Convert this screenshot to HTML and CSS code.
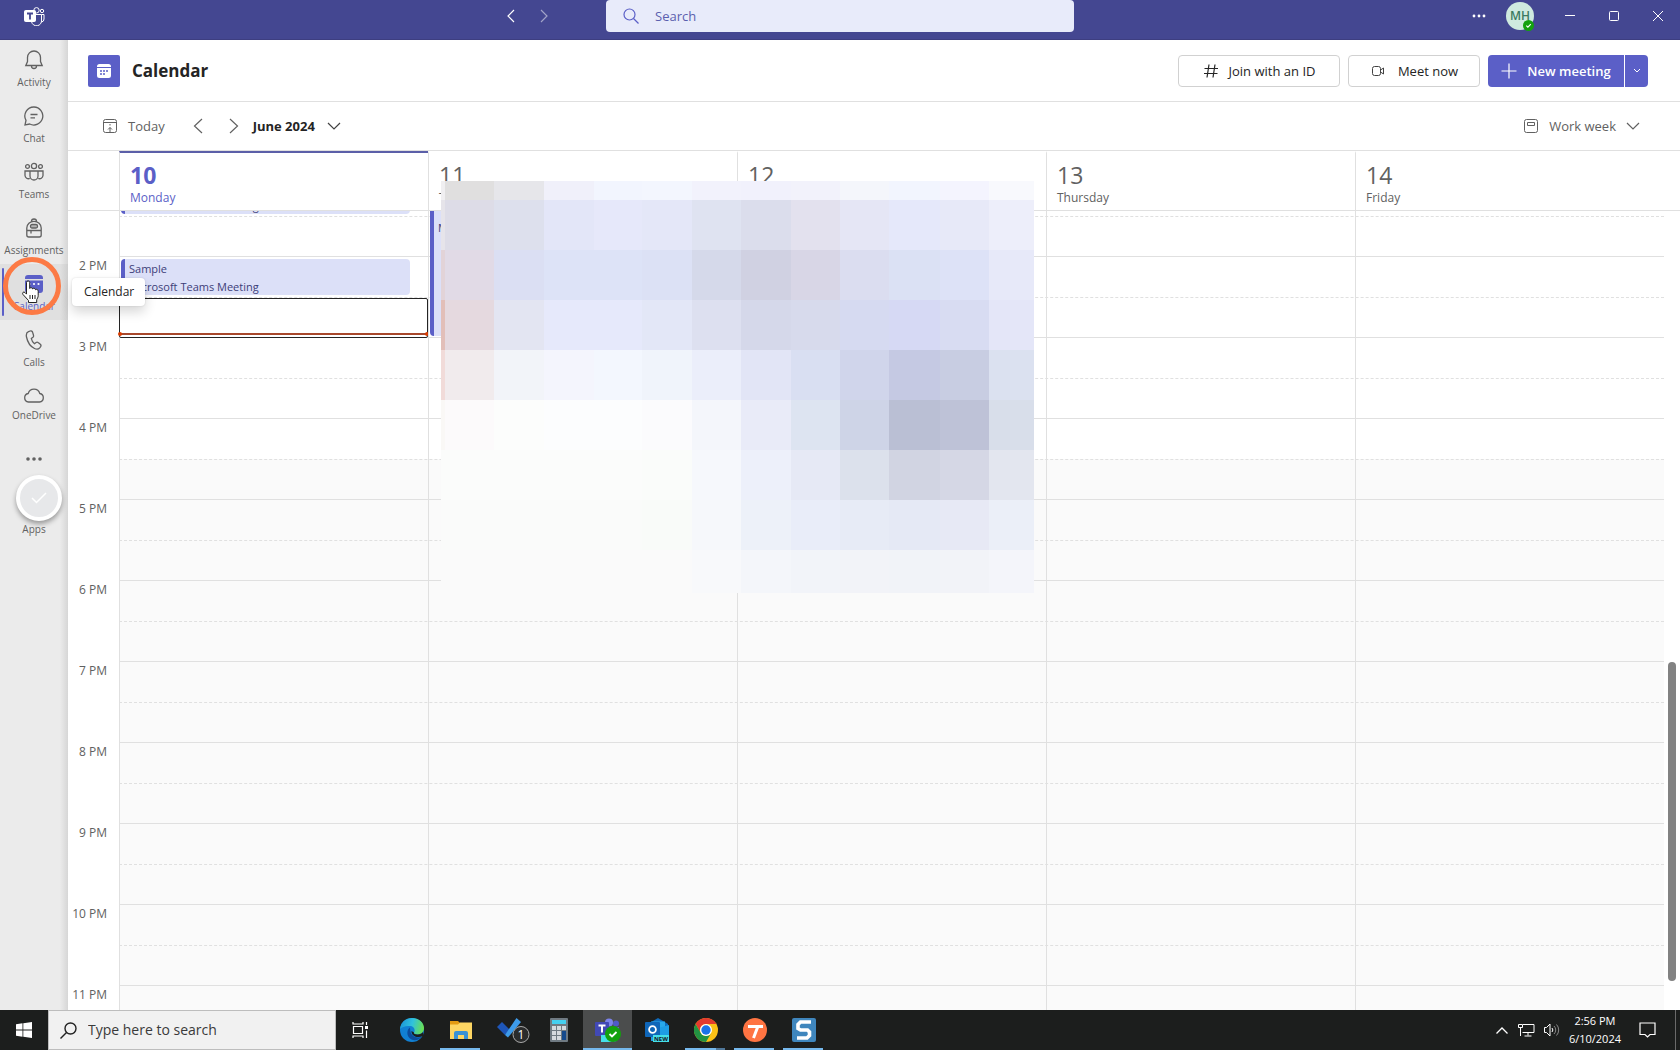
FILE: index.html
```html
<!DOCTYPE html>
<html lang="en">
<head>
<meta charset="utf-8">
<title>Calendar | Microsoft Teams</title>
<link rel="stylesheet" href="styles.css">
</head>
<body>
<header class="titlebar">
  <div class="titlebar-left">
    <svg class="teams-logo" width="21" height="19" viewBox="0 0 21 19" fill="none" stroke="#fff"><circle cx="12.500" cy="3.300" r="2.700"/><circle cx="18" cy="4" r="1.700"/><path d="M12 7.500h5.500v5.500a5 5 0 0 1-10 1.500M17.500 7.500h2.500v4.500a3 3 0 0 1-2.500 3"/><rect x="0.500" y="3.500" width="11" height="11" rx="1" fill="#fff"/><path d="M3 6.500h6M6 6.500v6" stroke="#444791" stroke-width="1.800"/></svg>
    <div class="history">
      <button class="bare" aria-label="Back"><svg width="16" height="16" viewBox="0 0 16 16" fill="none" stroke="#fff" stroke-width="1.200"><path d="M11 2 5 8l6 6"/></svg></button>
      <button class="bare faded" aria-label="Forward"><svg width="16" height="16" viewBox="0 0 16 16" fill="none" stroke="#fff" stroke-width="1.200"><path d="m5 2 6 6-6 6"/></svg></button>
    </div>
  </div>
  <label class="search">
    <svg width="16" height="16" viewBox="0 0 16 16" fill="none" stroke="#5b5fc7" stroke-width="1.200"><circle cx="6.500" cy="6.500" r="5.500"/><path d="m10.500 10.500 5 5"/></svg>
    <input type="text" placeholder="Search" aria-label="Search">
  </label>
  <div class="titlebar-right">
    <button class="bare" aria-label="More"><svg width="14" height="4" viewBox="0 0 14 4" fill="#fff"><circle cx="2" cy="2" r="1.400"/><circle cx="7" cy="2" r="1.400"/><circle cx="12" cy="2" r="1.400"/></svg></button>
    <button class="avatar" aria-label="Profile">MH<svg class="presence" width="11" height="11" viewBox="0 0 11 11"><circle cx="5.500" cy="5.500" r="5.500" fill="#13a10e"/><path d="m3.300 5.600 1.600 1.500 2.900-2.900" fill="none" stroke="#fff" stroke-width="1.200"/></svg></button>
    <button class="bare win" aria-label="Minimize"><svg width="12" height="12" viewBox="0 0 12 12" stroke="#fff"><path d="M1 5.500h10"/></svg></button>
    <button class="bare win" aria-label="Maximize"><svg width="12" height="12" viewBox="0 0 12 12" fill="none" stroke="#fff"><rect x="1.500" y="1.500" width="9" height="9" rx="1"/></svg></button>
    <button class="bare win" aria-label="Close"><svg width="12" height="12" viewBox="0 0 12 12" stroke="#fff"><path d="m1 1 10 10M11 1 1 11"/></svg></button>
  </div>
</header>

<div class="workspace">
  <nav class="rail">
    <a href="#"><svg width="20" height="20" viewBox="0 0 20 20"><path d="M10 1a6.500 6.500 0 0 0-6.500 6.500v4L1.800 15.500h16.400l-1.700-4v-4A6.500 6.500 0 0 0 10 1zM7.500 16a2.500 2.500 0 0 0 5 0"/></svg>Activity</a>
    <a href="#"><svg width="20" height="20" viewBox="0 0 20 20"><path d="M10 1a9 9 0 1 1-4.300 17L1 19l1-4.600A9 9 0 0 1 10 1zM6.500 8.500h7M6.500 11.800h4.500"/></svg>Chat</a>
    <a href="#"><svg width="20" height="20" viewBox="0 0 20 20"><circle cx="10" cy="4" r="2.600"/><circle cx="3.500" cy="4.500" r="1.900"/><circle cx="16.500" cy="4.500" r="1.900"/><path d="M6 9h8v5a4 4 0 0 1-8 0zM5.500 9H1v4.500a3.500 3.500 0 0 0 4.800 3M14.500 9H19v4.500a3.500 3.500 0 0 1-4.800 3"/></svg>Teams</a>
    <a href="#"><svg width="20" height="20" viewBox="0 0 20 20"><path d="M7.500 3.500a2.500 2.500 0 0 1 5 0M2.800 10a7.200 6.700 0 0 1 14.400 0v7a2 2 0 0 1-2 2H4.800a2 2 0 0 1-2-2zM2.800 12.500h14.400M7 12.500v3"/><rect x="6.500" y="6.500" width="7" height="3.500" rx="1.500" fill="#b5b5b5"/></svg>Assignments</a>
    <a href="#" class="current" aria-current="page"><svg width="20" height="20" viewBox="0 0 20 20"><path d="M1 4a3 3 0 0 1 3-3h12a3 3 0 0 1 3 3v1H1zM1 6.500h18V16a3 3 0 0 1-3 3H4a3 3 0 0 1-3-3z" fill="#5b5fc7" stroke="none"/><g fill="#fff" stroke="none"><circle cx="5.500" cy="10" r="1.100"/><circle cx="10" cy="10" r="1.100"/><circle cx="14.500" cy="10" r="1.100"/></g></svg>Calendar</a>
    <a href="#"><svg width="20" height="20" viewBox="0 0 20 20"><path d="M6.200 1 4.500 1.600C2.500 2.400 2 4.500 2.500 7c1 5 4 9.500 8 11.500 2 1 4 .8 5.200-.7l.9-1.200c.5-.7.400-1.700-.3-2.300l-2.200-1.700c-.6-.5-1.400-.5-2-.1l-1.600 1.200C9 12.500 7.700 10.700 7.300 8.500l1.600-1.200c.6-.5.8-1.200.6-1.900L8.700 2.500C8.400 1.300 7.300.6 6.200 1z"/></svg>Calls</a>
    <a href="#" class="drive"><svg width="22" height="20" viewBox="0 0 22 20"><path d="M5.500 16a4.300 4.300 0 0 1-.3-8.500 6 6 0 0 1 11.600 0A4.300 4.300 0 0 1 16.500 16z"/></svg>OneDrive</a>
    <button class="bare rail-more" aria-label="More apps"><svg width="16" height="4" viewBox="0 0 16 4" fill="#616161" stroke="none"><circle cx="2" cy="2" r="1.800"/><circle cx="8" cy="2" r="1.800"/><circle cx="14" cy="2" r="1.800"/></svg></button>
    <a href="#" class="apps">Apps</a>
    <div class="done-badge"><svg width="16" height="12" viewBox="0 0 16 12" fill="none" stroke="#fff" stroke-width="1.500"><path d="m1 6 4.500 4.500L15 1"/></svg></div>
    <div class="click-ring"></div>
    <svg class="pointer" width="19" height="24" viewBox="0 0 19 24"><path d="M5.500 2.500a1.600 1.600 0 0 1 3.200 0v6c.2-1.300 2.700-1.200 2.900.4.600-1.100 2.700-.8 2.900.8.900-.8 2.700-.3 2.700 1.500v4.500c0 1.500-1 3-1.500 4V22.500H7.500V20.500L2 14.500c-1.200-1.600.5-3.300 2-2l1.500 1.600z" fill="#fff" stroke="#222"/><path d="M9 15v4M11.500 15v4M14 15v4" stroke="#222"/></svg>
    <div class="tooltip" role="tooltip">Calendar</div>
  </nav>

  <main class="content">
    <div class="page-head">
      <div class="app-tile"><svg width="16" height="16" viewBox="0 0 16 16"><path d="M1 3.500A2.500 2.500 0 0 1 3.500 1h9A2.500 2.500 0 0 1 15 3.500V4H1zM1 5h14v7.500a2.500 2.500 0 0 1-2.500 2.500h-9A2.500 2.500 0 0 1 1 12.500z" fill="#fff"/><path d="M4 8h2M7 8h2M10 8h2M4 11h2M7 11h2" stroke="#5b5fc7" stroke-width="1.600"/></svg></div>
      <h1>Calendar</h1>
      <div class="actions">
        <button class="btn join"><svg width="16" height="16" viewBox="0 0 16 16" fill="none" stroke="#242424" stroke-width="1.200"><path d="M6 1.500 4 14.500M12 1.500l-2 13M1.500 5.500h13.500M1 10.500h13.500"/></svg>Join with an ID</button>
        <button class="btn meet"><svg width="16" height="16" viewBox="0 0 16 16" fill="none" stroke="#424242"><rect x="2.500" y="3.500" width="8" height="9" rx="2"/><path d="m10.500 7 3-2v6l-3-2"/></svg>Meet now</button>
        <div class="split">
          <button class="new"><svg width="16" height="16" viewBox="0 0 16 16" stroke="#fff" stroke-width="1.200"><path d="M8 0.500v15M.5 8h15"/></svg>New meeting</button>
          <button class="new-more" aria-label="More options"><svg width="8" height="6" viewBox="0 0 8 6" fill="none" stroke="#fff"><path d="m1 1 3 3 3-3"/></svg></button>
        </div>
      </div>
    </div>

    <div class="toolbar">
      <button class="bare today"><svg width="16" height="16" viewBox="0 0 16 16" fill="none" stroke="#616161"><rect x="1.500" y="1.500" width="13" height="13" rx="2"/><path d="M1.500 4.500h13M8 15V9.500M6 11.500l2-2 2 2M8 6v1.500"/></svg>Today</button>
      <button class="bare" aria-label="Previous week"><svg width="10" height="16" viewBox="0 0 10 16" fill="none" stroke="#616161" stroke-width="1.200"><path d="M9 1 1.500 8 9 15"/></svg></button>
      <button class="bare next" aria-label="Next week"><svg width="10" height="16" viewBox="0 0 10 16" fill="none" stroke="#616161" stroke-width="1.200"><path d="m1 1 7.500 7L1 15"/></svg></button>
      <button class="bare month">June 2024<svg width="14" height="8" viewBox="0 0 14 8" fill="none" stroke="#424242" stroke-width="1.200"><path d="m1 1 6 6 6-6"/></svg></button>
      <button class="bare view"><svg width="16" height="16" viewBox="0 0 16 16" fill="none" stroke="#616161"><rect x="1.500" y="1.500" width="13" height="13" rx="2"/><path d="M4.500 4.500h7v3h-7z"/></svg>Work week<svg width="14" height="8" viewBox="0 0 14 8" fill="none" stroke="#616161" stroke-width="1.200"><path d="m1 1 6 6 6-6"/></svg></button>
    </div>

    <div class="day-heads">
      <div class="day-head today-head"><b>10</b><span>Monday</span></div>
      <div class="day-head"><b>11</b><span>Tuesday</span></div>
      <div class="day-head"><b>12</b><span>Wednesday</span></div>
      <div class="day-head"><b>13</b><span>Thursday</span></div>
      <div class="day-head"><b>14</b><span>Friday</span></div>
    </div>

    <div class="viewport">
      <div class="schedule">
        <div class="hours">
          <div class="hour"><span>1 PM</span><div class="slot"></div></div>
          <div class="hour"><span>2 PM</span><div class="slot"></div></div>
          <div class="hour"><span>3 PM</span><div class="slot"></div></div>
          <div class="hour closing"><span>4 PM</span><div class="slot"></div></div>
          <div class="hour off"><span>5 PM</span><div class="slot"></div></div>
          <div class="hour off"><span>6 PM</span><div class="slot"></div></div>
          <div class="hour off"><span>7 PM</span><div class="slot"></div></div>
          <div class="hour off"><span>8 PM</span><div class="slot"></div></div>
          <div class="hour off"><span>9 PM</span><div class="slot"></div></div>
          <div class="hour off"><span>10 PM</span><div class="slot"></div></div>
          <div class="hour off"><span>11 PM</span><div class="slot"></div></div>
        </div>
        <div class="days">
          <div class="day">
            <div class="event" style="top:3px;height:36px">Sample<br>Microsoft Teams Meeting</div>
            <div class="event" style="top:84px;height:36px">Sample<br>Microsoft Teams Meeting</div>
            <div class="selected" style="top:123px;height:40px"></div>
            <div class="now" style="top:158px"></div>
          </div>
          <div class="day"><div class="event busy" style="top:0;height:161px">Meeting</div></div>
          <div class="day"></div>
          <div class="day"></div>
          <div class="day"></div>
        </div>
      </div>
      <div class="track"><div class="thumb" style="top:56.4%;height:40%"></div></div>
    </div>
    <div class="mosaic" id="mosaic"></div>
  </main>
</div>

<footer class="taskbar">
  <button class="bare start" aria-label="Start"><svg width="16" height="16" viewBox="0 0 16 16" fill="#fff"><path d="M0 2.200 6.500 1.300v6.300H0zM7.300 1.200 16 0v7.600H7.300zM0 8.400h6.500v6.300L0 13.800zM7.300 8.400H16V16l-8.700-1.200z"/></svg></button>
  <label class="task-search"><svg width="17" height="17" viewBox="0 0 17 17" fill="none" stroke="#222" stroke-width="1.400"><circle cx="10.500" cy="6.500" r="5.500"/><path d="M6.500 10.500.5 16.500"/></svg><input type="text" placeholder="Type here to search" aria-label="Type here to search"></label>
  <button class="bare app task-view" aria-label="Task view"><svg width="18" height="18" viewBox="0 0 18 18" fill="none" stroke="#fff" stroke-width="1.200"><path d="M2.500 5.500h9v7h-9zM2 1v2h10V1M2 17v-2h10v2M15.500 1v3M15.500 9.500V17"/><path d="M14 5h3v3h-3z" fill="#fff" stroke="none"/></svg></button>
  <button class="bare app" aria-label="Edge"><svg width="24" height="24" viewBox="0 0 24 24"><defs><linearGradient id="e1" x1="0" y1=".3" x2="1" y2=".5"><stop offset="0" stop-color="#1b95d8"/><stop offset=".5" stop-color="#30c2dd"/><stop offset="1" stop-color="#6be04f"/></linearGradient></defs><circle cx="12" cy="12" r="12" fill="#1180d3"/><path d="M0 11C.6 4.500 5.500 0 12 0c7 0 12 4.600 12 10 0 4-3 6.500-6.500 6.500-2.500 0-4-1-3.500-2 1.500-2 .5-6-3.500-6.500C5.500 7.500 1.500 9 0 11z" fill="url(#e1)"/><path d="M10 9.500c-3.500 2-4 9 1.500 12 3.500 1.800 8 .5 10.500-3-4 2-12 1.500-12-9z" fill="#0c4c9c"/><path d="M14 14.500c-.6 1 1 2 3.500 2 2.500 0 4.500-1 5.500-2.500v4c-6 3-12-.5-11.500-5z" fill="#1c1e1d"/></svg></button>
  <button class="bare app open" aria-label="File Explorer"><svg width="22" height="20" viewBox="0 0 22 20"><path d="M0 1h8l2 2v4H0z" fill="#e39b12"/><path d="M0 4.500h8L10 2.500h12V19H0z" fill="#fdd663"/><path d="M4 19v-6a2 2 0 0 1 2-2h10a2 2 0 0 1 2 2v6h-4v-4H8v4z" fill="#3a92d4"/></svg></button>
  <button class="bare app todo" aria-label="To Do"><svg width="34" height="26" viewBox="0 0 34 26"><path d="m1 10 5-5 8 8-5 5z" fill="#1e56b8"/><path d="M9 18 20.500 1 25 5 12 20.500z" fill="#3d9be9"/><circle cx="25" cy="17.500" r="8" fill="#2a2c2c" stroke="#aaa"/><text x="25" y="22" fill="#fff" font-size="12" font-family="Open Sans, sans-serif" text-anchor="middle">1</text></svg></button>
  <button class="bare app" aria-label="Calculator"><svg width="18" height="24" viewBox="0 0 18 24"><rect width="18" height="24" rx="1" fill="#6f7a82"/><path d="M2 2h14v4H2z" fill="#45d0f0"/><path d="M2 8h4v4H2zM7 8h4v4H7zM12 8h4v4h-4zM2 13h4v4H2zM7 13h4v4H7zM2 18h4v4H2zM7 18h4v4H7z" fill="#d5dade"/><path d="M12 13h4v9h-4z" fill="#154a8c"/></svg></button>
  <button class="bare app open active" aria-label="Teams"><svg width="26" height="24" viewBox="0 0 26 24"><circle cx="14" cy="4.500" r="4" fill="#7b83eb"/><circle cx="21" cy="5.500" r="3" fill="#5059c9"/><path d="M8 9h16v7a7 7 0 0 1-16 2z" fill="#5b62c9"/><rect y="4" width="14" height="14" rx="1" fill="#4149b5"/><path d="M3.500 7.500h7M7 7.500v7" stroke="#fff" stroke-width="2"/><path d="M6 17h10v7H6z" fill="#45dfe8"/><circle cx="18" cy="16" r="8" fill="#13a10e"/><path d="m14.500 16 2.500 2.500 4.500-4.500" fill="none" stroke="#fff" stroke-width="1.800"/></svg></button>
  <button class="bare app" aria-label="Outlook"><svg width="24" height="24" viewBox="0 0 24 24"><path d="M3 6 13 0l10 6v4H3z" fill="#0f6cbd"/><path d="M6 3.500h14V12H6z" fill="#28a8ea"/><path d="m6 12 18-5v16H6z" fill="#1e9de5"/><rect y="4" width="15" height="15" rx="1" fill="#0f66b8"/><circle cx="7.500" cy="11.500" r="3.400" fill="none" stroke="#fff" stroke-width="1.800"/><path d="M8 17h16v7H8z" fill="#45dfe8"/><text x="16" y="23" font-family="Open Sans, sans-serif" font-weight="700" font-size="6" text-anchor="middle" fill="#112">NEW</text></svg></button>
  <button class="bare app open stacked" aria-label="Chrome"><svg width="24" height="24" viewBox="0 0 24 24"><circle cx="12" cy="12" r="12" fill="#fbc116"/><path d="M1.600 6A12 12 0 0 1 22.400 6H12a6 6 0 0 0-5.200 9z" fill="#e33b2e"/><path d="M1.600 6A12 12 0 0 0 12 24l5.200-9a6 6 0 0 1-10.400 0z" fill="#229342"/><circle cx="12" cy="12" r="6" fill="#fff"/><circle cx="12" cy="12" r="4.700" fill="#1a73e8"/></svg></button>
  <button class="bare app open" aria-label="Tango"><svg width="24" height="24" viewBox="0 0 24 24"><circle cx="12" cy="12" r="12" fill="#ff7442"/><path d="M5 8.500h15M14.500 9.500 10.500 20" stroke="#fff" stroke-width="3" fill="none"/></svg></button>
  <button class="bare app open" aria-label="Snagit"><svg width="24" height="24" viewBox="0 0 24 24"><rect width="24" height="24" rx="2" fill="#3f86bd"/><path d="M19 4H8.500L6 6.500v4L8.500 12h7l2 2v3.500L15 20H5" fill="none" stroke="#fff" stroke-width="3.600"/></svg></button>
  <div class="tray">
    <svg width="14" height="9" viewBox="0 0 14 9" fill="none" stroke="#fff" stroke-width="1.300"><path d="m1.500 7.500 5.500-5.500 5.500 5.500"/></svg>
    <svg width="17" height="14" viewBox="0 0 17 14" fill="none" stroke="#fff"><path d="M5 1.500h11v8H4.500M10 9.500v3M6.500 13h7M.5 1.500h4v3h-4zM2.500 4.500V13"/></svg>
    <svg width="16" height="14" viewBox="0 0 16 14" fill="none" stroke="#fff"><path d="M.5 4.500h2L6 1v12L2.500 9.500h-2zM8 5a3 3 0 0 1 0 4"/><path d="M10 3a5.500 5.500 0 0 1 0 8M12.500 1.500a8 8 0 0 1 0 11" stroke="#888"/></svg>
    <div class="clock">2:56 PM<br>6/10/2024</div>
    <svg width="17" height="17" viewBox="0 0 17 17" fill="none" stroke="#fff" stroke-width="1.200"><path d="M1 1h15v11.500h-5L8.500 15 6 12.500H1z"/></svg>
    <div class="show-desktop"></div>
  </div>
</footer>
<script src="mosaic.js"></script>
</body>
</html>
```
FILE: styles.css
```css
* { box-sizing: border-box; }
body {
  margin: 0; height: 100vh; display: flex; flex-direction: column; overflow: hidden;
  font: 12px/16px "Open Sans", "Noto Sans", sans-serif; color: #242424; background: #fff;
}
button, input { font: inherit; color: inherit; }
button { cursor: pointer; }
svg { flex: none; display: block; }
.bare { border: 0; background: none; padding: 0; display: flex; align-items: center; justify-content: center; }
.faded { opacity: .5; }

/* title bar */
.titlebar {
  display: grid; grid-template-columns: 1fr minmax(0, 468px) 1fr; align-items: start;
  height: 40px; background: #444791; border-bottom: 1px solid #3d3e80; flex: none;
}
.titlebar-left, .titlebar-right { display: flex; align-items: center; height: 32px; }
.titlebar-left { justify-content: space-between; padding: 0 54px 0 24px; }
.history { display: flex; gap: 17px; }
.search { display: flex; align-items: center; gap: 16px; height: 32px; padding: 0 17px; background: #e8ebfa; border-radius: 4px; }
.search input { flex: 1; min-width: 0; border: 0; background: none; padding: 0; outline: 0; font-size: 13px; }
.search input::placeholder { color: #5b5fae; opacity: 1; }
.titlebar-right { justify-content: flex-end; }
.avatar {
  position: relative; width: 28px; height: 28px; margin: 0 14px 0 20px; padding: 0; border: 0; border-radius: 50%;
  background: #cfeadf; color: #3c7a60; font-weight: 600; font-size: 12px;
}
.presence { position: absolute; right: 0; bottom: -1px; }
.win { width: 44px; height: 32px; }

/* app rail */
.workspace { flex: 1; min-height: 0; display: flex; }
.rail {
  position: relative; z-index: 2; width: 68px; flex: none; display: flex; flex-direction: column;
  background: linear-gradient(90deg, #ebebeb 60px, #d6d6d6); color: #616161; font-size: 10px; line-height: 12px;
}
.rail a {
  display: flex; flex-direction: column; align-items: center; gap: 6px; height: 56px; padding-top: 10px;
  color: inherit; text-decoration: none; fill: none; stroke: #616161; stroke-width: 1.3;
}
.rail a.current { color: #5b5fc7; background: linear-gradient(90deg, #e0e0e0 60px, #cecece); position: relative; }
.rail a.current::before { content: ""; position: absolute; left: 2px; top: 4px; bottom: 4px; width: 2px; background: #5b5fc7; border-radius: 1px; }
.rail a.drive { gap: 3px; }
.rail-more { height: 54px; }
.rail a.apps { padding-top: 37px; }
.done-badge {
  position: absolute; left: 16px; top: 435px; width: 46px; height: 46px; border: 4px solid #fff; border-radius: 50%;
  background: #e7e8ea; box-shadow: 0 3px 5px rgba(0,0,0,.35); display: flex; align-items: center; justify-content: center;
}
.click-ring { position: absolute; left: 3px; top: 217px; width: 58px; height: 58px; border: 5px solid #fc7a45; border-radius: 50%; }
.pointer { position: absolute; left: 21px; top: 240px; }
.tooltip {
  position: absolute; left: 72px; top: 238px; padding: 6px 11px 6px 12px; background: #fff; color: #242424; border-radius: 4px;
  font-size: 12px; line-height: 16px; box-shadow: 0 6px 12px rgba(0,0,0,.16), 0 0 2px rgba(0,0,0,.14);
}

/* page header */
.content { position: relative; flex: 1; min-width: 0; display: flex; flex-direction: column; }
.page-head { display: flex; align-items: center; gap: 12px; height: 62px; padding: 0 32px 0 20px; border-bottom: 1px solid #e0e0e0; flex: none; }
.app-tile { width: 32px; height: 32px; background: #5b5fc7; border-radius: 2px; display: flex; align-items: center; justify-content: center; }
h1 { margin: 0; font-size: 17px; line-height: 24px; font-weight: 700; }
.actions { margin-left: auto; display: flex; gap: 8px; font-size: 13px; font-weight: 600; }
.btn, .new, .new-more { display: flex; align-items: center; justify-content: center; gap: 10px; height: 32px; padding: 0; }
.btn { background: #fff; border: 1px solid #d1d1d1; border-radius: 4px; font-weight: 500; }
.join { width: 162px; }
.meet { width: 132px; gap: 12px; }
.split { display: flex; gap: 1px; color: #fff; }
.new, .new-more { background: #5b5fc7; border: 0; }
.new { width: 136px; border-radius: 4px 0 0 4px; }
.new-more { width: 23px; border-radius: 0 4px 4px 0; }

.toolbar { display: flex; align-items: center; height: 49px; padding: 0 40px 0 34px; border-bottom: 1px solid #e0e0e0; flex: none; font-size: 13px; color: #616161; }
.today { gap: 10px; margin-right: 28px; }
.next { margin-left: 26px; margin-right: 14px; }
.month { gap: 12px; font-weight: 700; color: #242424; }
.view { gap: 10px; margin-left: auto; }

/* day headings */
.day-heads, .days { display: grid; grid-template-columns: repeat(5, 1fr); padding-left: 51px; }
.day-heads { height: 60px; padding-right: 16px; border-bottom: 1px solid #e0e0e0; flex: none; }
.day-head { display: flex; flex-direction: column; border-left: 1px solid #e0e0e0; padding: 7px 10px 0; color: #616161; border-top: 2px solid transparent; }
.day-head b { font-size: 23px; line-height: 30px; font-weight: 400; }
.today-head { border-top-color: #5b5fa8; color: #5b5fc7; }
.today-head b { font-weight: 700; }

/* time grid */
.viewport { flex: 1; min-height: 0; display: flex; overflow: hidden; }
.schedule { flex: 1; display: grid; margin-top: -36px; }
.hours, .days { grid-area: 1 / 1; }
.hour { display: flex; height: 81px; color: #616161; }
.hour span { width: 51px; padding: 2px 12px 0 0; text-align: right; white-space: nowrap; flex: none; }
.slot { flex: 1; border-top: 1px solid #e0e0e0; display: grid; grid-template-rows: 40px 40px; }
.slot::after { content: ""; grid-row: 2; border-top: 1px dashed #e0e0e0; }
.off .slot, .closing .slot::after { background: #fafafa; }
.day { position: relative; border-left: 1px solid #e0e0e0; }
.event {
  position: absolute; left: 1px; right: 18px; padding: 1px 4px; border-left: 4px solid #5b5fc7; border-radius: 4px;
  background: #dce0f8; color: #3d3e78; font-size: 11px; line-height: 18px; overflow: hidden; white-space: nowrap;
}
.busy { padding-top: 44px; }
.selected { position: absolute; left: -1px; right: 0; border: 1px solid #242424; border-radius: 2px; background: #fff; }
.now { position: absolute; left: 0; right: 0; height: 2px; background: #a8482c; }
.now::before, .now::after { content: ""; position: absolute; top: -1px; width: 4px; height: 4px; border-radius: 50%; background: #d83b01; }
.now::before { left: -2px; }
.now::after { right: -1px; }
.track { position: relative; width: 16px; flex: none; }
.thumb { position: absolute; left: 4px; width: 8px; border-radius: 4px; background: #828282; }

/* pixelated privacy cover */
.mosaic {
  position: absolute; left: 373px; top: 141px; display: grid;
  grid-template-columns: 4px 49px 50px 50px 48px 50px 49px 50px 49px 49px 51px 49px 45px;
  grid-template-rows: 19px repeat(7, 50px) 43px;
}

/* taskbar */
.taskbar { display: flex; height: 40px; background: #1c1e1d; color: #fff; flex: none; }
.start { width: 48px; }
.task-search { display: flex; align-items: center; gap: 11px; width: 288px; padding: 0 11px; background: #f1f1f1; border: 1px solid #bdbdbd; color: #333; }
.task-search input { flex: 1; min-width: 0; border: 0; background: none; padding: 0; outline: 0; font-size: 14px; line-height: 20px; }
.task-search input::placeholder { color: #3a3a3a; opacity: 1; }
.app { position: relative; width: 49px; }
.task-view { width: 48px; margin-right: 3px; }
.todo { padding-left: 6px; }
.app.open::after { content: ""; position: absolute; left: 4px; right: 5px; bottom: 0; height: 2px; background: #76b9ed; }
.app.active { background: #4b4d4d; }
.app.active::after { left: 0; right: 0; }
.app.stacked::after { background: linear-gradient(90deg, #76b9ed 31px, #50789a 31px); }
.tray { margin-left: auto; display: flex; align-items: center; gap: 9px; }
.clock { font-size: 11px; text-align: center; line-height: 18px; margin-right: 9px; }
.show-desktop { width: 5px; height: 40px; border-left: 1px solid #6a6a6a; margin-left: 10px; }
```
FILE: mosaic.js
```js
const rows = [
  "f0eff1 e0dfdf e6e6ea f0f0fa f2f5fe f3f6fe f2f2fc f1f1fc f2f2fb f4f6fb f2f5fe f4f4fe f8f9fd",
  "e6e4ea dddce7 dde0ed e3e6f8 e6e8fa e4e7f8 dfe3f1 dbddec e3e1ee e5e6f5 e5e8fa e7e9f8 edeefa",
  "e2d3d8 e1dae6 dbdff3 dde3f7 dde3f7 dce1f5 d5d9ea d0d1e2 d8d6e6 dbddf0 dbe1f4 dde2f7 e7e9f9",
  "e2bfb9 e5d9df e3e5f2 e6e9fb e6e9fb e3e7f7 dde0f0 d5d8ea d7daec d6daf1 d6d9f4 d8dcf2 e4e6f8",
  "f1dbd9 f1ebed f2f4f9 f4f5fd f3f7fe f0f4fb ebeefa e2e5f6 d9dff2 d0d5eb c5c9e3 c8cde2 dbe1f0",
  "faf8f6 fcfafb fcfdfc fcfdfe fcfdfe fbfbfd f4f6fb e9ebf8 dde4f1 ced4e7 babfd4 bec2d7 d8deea",
  "fbfcfb fbfcfb fbfcfb fbfcfb fbfcfb fafcfa f6f8fc edf0fa e6e9f5 dce1ec d1d4e2 d5d7e5 e3e6ef",
  "fafbfa fafbfa fafbfa fafbfa fafbfa f9fbf9 f6f8fb edf1f9 e9edf9 e7ebf6 e5e9f5 e7e9f5 ebeff8",
  "fafafa fafafa fafafa fafafa fafafa fafafa f8f9fb f4f6fa f2f4f9 f2f3f8 f1f3f8 f2f3f8 f4f5fa"
];
const mosaic = document.getElementById("mosaic");
for (const color of rows.join(" ").split(" ")) {
  const cell = document.createElement("div");
  cell.style.background = "#" + color;
  mosaic.append(cell);
}
```
